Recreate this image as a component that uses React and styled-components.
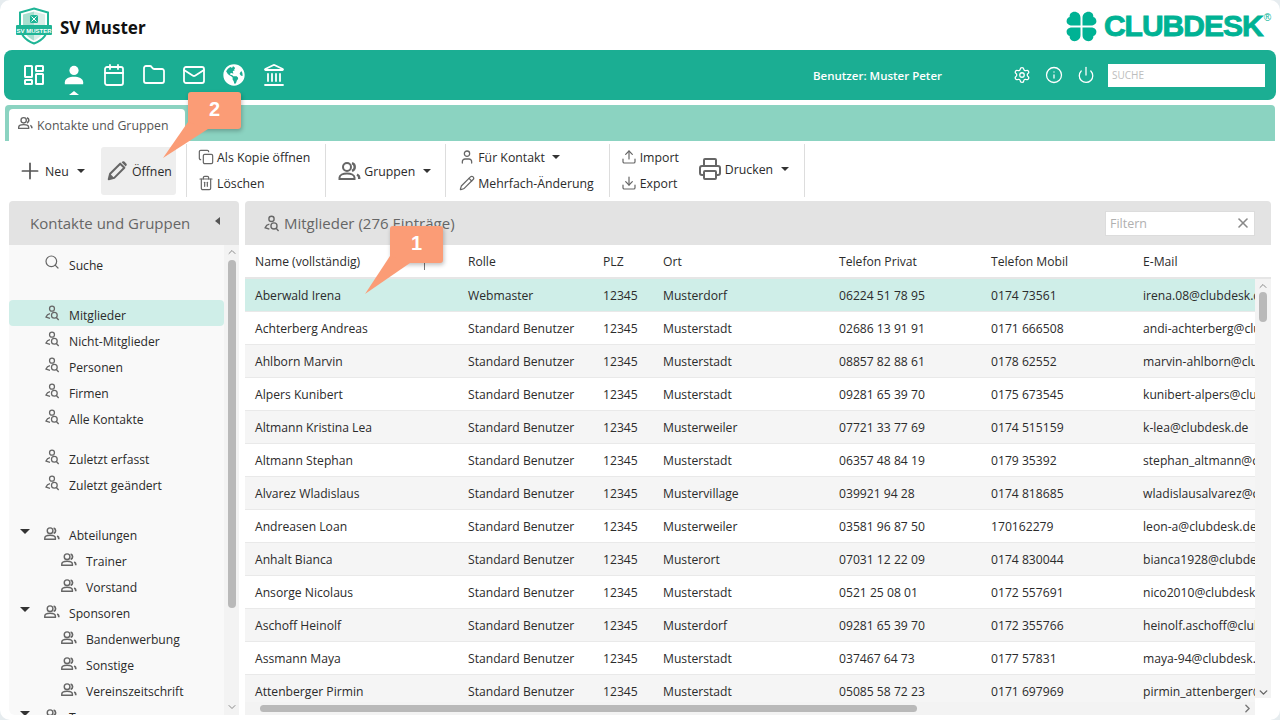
import React from "react";
import styled, { createGlobalStyle } from "styled-components";
import {
  Plus, Copy, Trash2, User, Pencil, Upload, Download, Printer, Search, X,
  Calendar, Folder, Mail, Landmark, Settings, Info, Power, ChevronUp, ChevronDown, ChevronRight,
} from "lucide-react";
import { FaGlobeAmericas } from "react-icons/fa";

const Global = createGlobalStyle`
  html, body { margin: 0; padding: 0; width: 1280px; height: 720px; overflow: hidden; background: #e6ecef; }
  #root { width: 1280px; height: 720px; }
  * { box-sizing: border-box; }
`;

const Page = styled.div`
  position: relative;
  width: 1280px; height: 720px;
  background: #fff;
  border-radius: 10px;
  overflow: hidden;
  display: flex; flex-direction: column;
  font-family: "Open Sans", "Noto Sans", sans-serif;
  font-size: 12.15px;
  color: #2b2b2b;
`;
const Header = styled.header`
  height: 50px; display: flex; align-items: center; justify-content: space-between;
  padding: 2px 9px 0 15px; flex: none;
`;
const Brand = styled.div`display: flex; align-items: center; gap: 7px;`;
const BrandName = styled.div`font-size: 17px; font-weight: 700; color: #111; font-family: "Noto Sans", sans-serif; margin-top: 3px;`;
const ClubLogo = styled.div`display: flex; align-items: center; gap: 7px; color: #00b294;`;
const ClubText = styled.div`
  font-family: "Liberation Sans", sans-serif; font-weight: 700; font-size: 30px; letter-spacing: -1px;
  -webkit-text-stroke: 0.9px #00b294; line-height: 30px; white-space: nowrap;
`;
const Reg = styled.sup`font-size: 10px; font-weight: 400; -webkit-text-stroke: 0; vertical-align: 15px; letter-spacing: 0; line-height: 0; margin-left: 1px;`;
const NavBar = styled.nav`
  flex: none; height: 50px; margin: 0 4px; background: #1bae93; border-radius: 8px;
  display: flex; align-items: center; color: #fff; padding: 0 11px 0 15px;
`;
const NavIcons = styled.div`display: flex; gap: 10px; align-items: center;`;
const NavIcon = styled.div`
  position: relative; width: 30px; height: 30px; display: flex; align-items: center; justify-content: center;
  ${p => p.$active && `
    &::after { content: ""; position: absolute; left: 10px; bottom: -5px; border: 5px solid transparent; border-top: 0; border-bottom: 4px solid #fff; }
  `}
`;
const NavUser = styled.div`margin-left: auto; font-size: 11.5px; font-weight: 600; margin-right: 70px;`;
const NavTools = styled.div`display: flex; gap: 12px; margin-right: 12px;`;
const NavTool = styled.div`width: 20px; height: 20px; display: flex; align-items: center; justify-content: center;`;
const SearchBox = styled.div`
  width: 157px; height: 23px; background: #fff; color: #bdbdbd; font-size: 10px; padding: 0 4px; display: flex; align-items: center;
`;
const TabStrip = styled.div`
  flex: none; height: 36px; margin: 5px 5px 0; padding: 4px 0 0 4px; background: #8bd3c1; border-radius: 4px 4px 0 0;
  display: flex;
`;
const Tab = styled.div`
  width: 176px; background: #fff; border-radius: 4px 4px 0 0; display: flex; align-items: center; gap: 4px; padding-left: 8px;
  color: #555; font-size: 12.3px;
`;
const TabIcon = styled.span`display: flex; margin-top: -4px;`;
const Toolbar = styled.div`
  flex: none; height: 59px; padding: 3px 0 3px 9px; display: flex; align-items: stretch; background: #fff; font-size: 12.3px;
`;
const Group = styled.div`
  display: flex; align-items: flex-start; padding: 0 ${p => p.$pr ?? 10}px 0 ${p => p.$pl ?? 10}px;
  ${p => p.$sep && "border-right: 1px solid #ddd;"}
`;
const BigBtn = styled.div`
  display: flex; align-items: center; gap: ${p => p.$gap ?? 3}px; padding-left: ${p => p.$pl ?? 0}px; border-radius: 3px;
  margin-top: ${p => p.$mt ?? 3}px; height: 48px; width: ${p => (p.$w ? `${p.$w}px` : "auto")};
  background: ${p => (p.$hover ? "#eeeeee" : "transparent")};
`;
const Stack = styled.div`display: flex; flex-direction: column;`;
const SmallBtn = styled.div`display: flex; align-items: center; gap: 3px; height: 26px; white-space: nowrap;`;
const Caret = styled.span`
  display: inline-block; margin-left: ${p => p.$ml ?? 5}px; border: 4px solid transparent; border-top: 4px solid #333; border-bottom: 0;
`;
const Main = styled.div`
  flex: 1; min-height: 0; display: flex; gap: 6px; padding: 1px 9px 5px;
`;
const SidePanel = styled.aside`width: 230px; display: flex; flex-direction: column; flex: none;`;
const PanelHead = styled.div`
  flex: none; height: 44px; background: #e3e3e3; border-radius: 4px 4px 0 0; display: flex; align-items: center;
  color: #666; font-size: 15px;
`;
const SideHead = styled(PanelHead)`padding: 0 19px 0 21px; justify-content: space-between;`;
const CollapseTri = styled.span`
  border: 4px solid transparent; border-right: 5px solid #555; border-left: 0; margin-top: -5px;
`;
const SideBody = styled.div`flex: 1; min-height: 0; display: flex; background: #f9f9f9; overflow: hidden; border-radius: 0 0 0 6px;`;
const Tree = styled.div`flex: 1; min-width: 0; padding-top: 5px; overflow: hidden;`;
const TreeRow = styled.div`
  height: 26px; display: flex; align-items: center; border-radius: 4px; flex: none;
  margin-top: ${p => p.$mt ?? 0}px;
  padding-left: ${p => p.$indent ?? 35}px;
  background: ${p => (p.$sel ? "#cfeee8" : "transparent")};
  gap: ${p => p.$gap ?? 9}px;
  white-space: nowrap;
`;
const RowLabel = styled.span`margin-top: 4px;`;
const SearchIconWrap = styled.span`display: flex; margin-top: -2px;`;
const TreeTri = styled.span`
  width: 0; height: 0; border: 5px solid transparent; border-top: 5px solid #333; border-bottom: 0; margin: -3px 4px 0 -23px;
`;
const VScroll = styled.div`
  width: ${p => p.$w}px; flex: none; display: flex; flex-direction: column; align-items: center; background: #f3f3f3;
  color: #8a8a8a; margin-bottom: ${p => p.$mb ?? 0}px; overflow: hidden;
`;
const Thumb = styled.div`
  width: 8px; background: #b9b9b9; border-radius: 4px; flex: none;
  margin-top: ${p => p.$mt}px; height: ${p => p.$h}px;
`;
const ArrowSlot = styled.div`height: 14px; display: flex; align-items: center; justify-content: center; flex: none; margin-top: ${p => p.$mt ?? 0}px;`;
const ContentPanel = styled.section`flex: 1; min-width: 0; display: flex; flex-direction: column;`;
const ContentHead = styled(PanelHead)`padding: 0 16px 0 18px; gap: 4px;`;
const FilterBox = styled.div`
  margin-left: auto; width: 150px; height: 25px; background: #fff; border: 1px solid #dcdcdc; color: #b0b0b0; font-size: 12.5px;
  display: flex; align-items: center; justify-content: space-between; padding: 0 3px 0 4px;
`;
const Columns = `grid-template-columns: 213px 135px 60px 176px 152px 152px 1fr;`;
const TableHead = styled.div`
  flex: none; height: 34px; display: grid; ${Columns} align-items: center; background: #fff; border-bottom: 2px solid #e6e6e6; position: relative;
  padding-right: 16px;
`;
const Cell = styled.div`padding-left: 10px; white-space: nowrap; overflow: hidden;`;
const ColGrip = styled.span`position: absolute; left: 179px; top: 14px; width: 1px; height: 11px; background: #777;`;
const TableBody = styled.div`flex: 1; min-height: 0; display: flex; overflow: hidden;`;
const Rows = styled.div`flex: 1; min-width: 0; overflow: hidden;`;
const Row = styled.div`
  height: 33px; display: grid; ${Columns} align-items: center; border-bottom: 1px solid #e9e9e9;
  background: ${p => (p.$sel ? "#cfeee8" : p.$alt ? "#f5f5f5" : "#fff")};
`;
const HScroll = styled.div`
  flex: none; height: 13px; display: flex; align-items: center; background: #f3f3f3; padding-left: 15px;
  margin-right: 16px; color: #777;
`;
const HThumb = styled.div`width: 657px; height: 7px; border-radius: 4px; background: #b9b9b9;`;
const HArrow = styled.div`margin-left: auto; margin-right: 1px; display: flex;`;
const Callout = styled.div`
  position: absolute; left: ${p => p.$x}px; top: ${p => p.$y}px; width: 53px; height: 37px; background: #fb9c76; border-radius: 3px;
  color: #fff; font-family: "Liberation Sans", sans-serif; font-weight: 700; font-size: 20px;
  display: flex; align-items: center; justify-content: center; padding-bottom: 3px;
  box-shadow: 1px 2px 4px rgba(0,0,0,.25); z-index: 3;
`;
const CalloutTail = styled.svg`position: absolute; left: -27px; top: 30px; overflow: visible;`;

const IconUsers = ({ s = 17, c = "#666" }) => (
  <svg width={s} height={s} viewBox="0 0 24 24" fill="none" stroke={c} strokeWidth="2">
    <circle cx="10" cy="8" r="4" />
    <path d="M2.500 20v-1.500C2.500 16 6 14.500 10 14.500s7.500 1.500 7.500 4V20z" />
    <path d="M15 4.200a4 4 0 0 1 0 7.600" strokeWidth="2.400" />
    <path d="M20 15.500c1.500.8 2.200 1.800 2.200 3V20" strokeWidth="2.400" />
  </svg>
);
const IconUserSearch = ({ s = 16 }) => (
  <svg width={s} height={s} viewBox="0 0 24 24" fill="none" stroke="#666" strokeWidth="1.900">
    <circle cx="12" cy="5.500" r="3.700" />
    <path d="M9 13c-3 .6-5 2.400-6 5l6 2" />
    <circle cx="15.500" cy="15.500" r="4.300" />
    <path d="M18.500 18.700l3.500 3.800" />
  </svg>
);
const DashIcon = () => (
  <svg width="24" height="24" viewBox="0 0 24 24" fill="none" stroke="#fff" strokeWidth="2">
    <rect x="3" y="3" width="7" height="11" rx=".5" />
    <rect x="14" y="3" width="7" height="5" rx=".5" />
    <rect x="14" y="11" width="7" height="10" rx=".5" />
    <rect x="3" y="17" width="7" height="4" rx=".5" />
  </svg>
);
const PersonIcon = () => (
  <svg width="22" height="22" viewBox="0 0 24 24" fill="#fff">
    <circle cx="12" cy="7" r="5" />
    <path d="M2 22v-2c0-4 5-6 10-6s10 2 10 6v2z" />
  </svg>
);
const PencilFat = () => (
  <svg width="22" height="22" viewBox="0 0 24 24" fill="#666">
    <path d="M3 21l1.500-6L15.500 4l4.500 4.500L9 19.500z" fill="none" stroke="#666" strokeWidth="2.200" strokeLinejoin="round" />
    <path d="M3 21l1.500-6 4.500 4.500z" />
    <path d="M17 2.500l1-.8a1.500 1.500 0 0 1 2 0l2.300 2.300a1.500 1.500 0 0 1 0 2l-.8 1z" />
  </svg>
);
const Shield = () => (
  <svg width="38" height="38" viewBox="0 0 38 38">
    <path d="M19 1.500l14 4v13c0 9-6 15-14 18-8-3-14-9-14-18v-13z" fill="#fff" stroke="#1fb596" strokeWidth="2" />
    <path d="M8 7.500l11-3v29c-6-2.500-11-8-11-15z" fill="#a7dfcf" />
    <path d="M19 4.500l11 3v11c0 7-5 12.500-11 15z" fill="#d9eee8" />
    <rect x="15" y="8" width="8" height="8" rx="1.500" fill="#1fb596" />
    <path d="M16.500 9.500l5 5M21.500 9.500l-5 5" stroke="#fff" strokeWidth="1" />
    <rect x="1" y="18" width="36" height="10" rx="1" fill="#1fb596" />
    <text x="19" y="25.500" textAnchor="middle" fontFamily="Liberation Sans" fontSize="6" fontWeight="700" fill="#fff">SV MUSTER</text>
  </svg>
);
const Petal = ({ t }) => (
  <path transform={t} d="M14.500 14.500V7C14.500 3 11.500 .8 8.500 .8 5.300.8 3.300 3.300 3.700 6 1.800 6.500.6 8.300.6 10.300c0 2.600 2.400 4.200 5.400 4.200z" />
);
const Clover = () => (
  <svg width="31" height="31" viewBox="0 0 31 31" fill="#00b294">
    <Petal t="" />
    <Petal t="translate(31 0) scale(-1 1)" />
    <Petal t="translate(0 31) scale(1 -1)" />
    <Petal t="translate(31 31) scale(-1 -1)" />
  </svg>
);

const people = [
  ["Aberwald Irena", "Webmaster", "Musterdorf", "06224 51 78 95", "0174 73561", "irena.08@clubdesk.de"],
  ["Achterberg Andreas", "Standard Benutzer", "Musterstadt", "02686 13 91 91", "0171 666508", "andi-achterberg@clubdesk.de"],
  ["Ahlborn Marvin", "Standard Benutzer", "Musterstadt", "08857 82 88 61", "0178 62552", "marvin-ahlborn@clubdesk.de"],
  ["Alpers Kunibert", "Standard Benutzer", "Musterstadt", "09281 65 39 70", "0175 673545", "kunibert-alpers@clubdesk.de"],
  ["Altmann Kristina Lea", "Standard Benutzer", "Musterweiler", "07721 33 77 69", "0174 515159", "k-lea@clubdesk.de"],
  ["Altmann Stephan", "Standard Benutzer", "Musterstadt", "06357 48 84 19", "0179 35392", "stephan_altmann@clubdesk.de"],
  ["Alvarez Wladislaus", "Standard Benutzer", "Mustervillage", "039921 94 28", "0174 818685", "wladislausalvarez@clubdesk.de"],
  ["Andreasen Loan", "Standard Benutzer", "Musterweiler", "03581 96 87 50", "170162279", "leon-a@clubdesk.de"],
  ["Anhalt Bianca", "Standard Benutzer", "Musterort", "07031 12 22 09", "0174 830044", "bianca1928@clubdesk.de"],
  ["Ansorge Nicolaus", "Standard Benutzer", "Musterstadt", "0521 25 08 01", "0172 557691", "nico2010@clubdesk.de"],
  ["Aschoff Heinolf", "Standard Benutzer", "Musterdorf", "09281 65 39 70", "0172 355766", "heinolf.aschoff@clubdesk.de"],
  ["Assmann Maya", "Standard Benutzer", "Musterstadt", "037467 64 73", "0177 57831", "maya-94@clubdesk.de"],
  ["Attenberger Pirmin", "Standard Benutzer", "Musterstadt", "05085 58 72 23", "0171 697969", "pirmin_attenberger@clubdesk.de"],
];

const tree = [
  { t: "Mitglieder", sel: true, mt: 24 }, { t: "Nicht-Mitglieder" }, { t: "Personen" }, { t: "Firmen" }, { t: "Alle Kontakte" },
  { t: "Zuletzt erfasst", mt: 14 }, { t: "Zuletzt geändert" },
];
const groups = [
  { t: "Abteilungen", tri: true, mt: 24 }, { t: "Trainer", sub: true }, { t: "Vorstand", sub: true },
  { t: "Sponsoren", tri: true }, { t: "Bandenwerbung", sub: true }, { t: "Sonstige", sub: true }, { t: "Vereinszeitschrift", sub: true },
  { t: "Teams", tri: true },
];

export default function App() {
  return (
    <Page>
      <Global />
      <Header>
        <Brand>
          <Shield />
          <BrandName>SV Muster</BrandName>
        </Brand>
        <ClubLogo>
          <Clover />
          <ClubText>CLUBDESK<Reg>®</Reg></ClubText>
        </ClubLogo>
      </Header>
      <NavBar>
        <NavIcons>
          <NavIcon><DashIcon /></NavIcon>
          <NavIcon $active><PersonIcon /></NavIcon>
          <NavIcon><Calendar size={24} strokeWidth={1.8} /></NavIcon>
          <NavIcon><Folder size={24} strokeWidth={1.8} /></NavIcon>
          <NavIcon><Mail size={24} strokeWidth={1.8} /></NavIcon>
          <NavIcon><FaGlobeAmericas size={22} /></NavIcon>
          <NavIcon><Landmark size={24} strokeWidth={1.8} /></NavIcon>
        </NavIcons>
        <NavUser>Benutzer: Muster Peter</NavUser>
        <NavTools>
          <NavTool><Settings size={18} strokeWidth={1.7} /></NavTool>
          <NavTool><Info size={18} strokeWidth={1.7} /></NavTool>
          <NavTool><Power size={18} strokeWidth={1.7} /></NavTool>
        </NavTools>
        <SearchBox>SUCHE</SearchBox>
      </NavBar>
      <TabStrip>
        <Tab><TabIcon><IconUsers s={16} /></TabIcon>Kontakte und Gruppen</Tab>
      </TabStrip>
      <Toolbar>
        <Group $sep $pl={0} $pr={10}>
          <BigBtn $w={92} $pl={8} $gap={2}>
            <Plus size={26} strokeWidth={1.6} color="#555" />
            <span>Neu</span><Caret $ml={6} />
          </BigBtn>
          <BigBtn $w={75} $hover $pl={5} $gap={4}>
            <PencilFat />
            <span>Öffnen</span>
          </BigBtn>
        </Group>
        <Group $sep $pl={11} $pr={15}>
          <Stack>
            <SmallBtn><Copy size={16} strokeWidth={1.8} color="#666" />Als Kopie öffnen</SmallBtn>
            <SmallBtn><Trash2 size={16} strokeWidth={1.8} color="#666" />Löschen</SmallBtn>
          </Stack>
        </Group>
        <Group $sep $pl={11} $pr={14}>
          <BigBtn $gap={3}>
            <IconUsers s={24} />
            <span>Gruppen</span><Caret />
          </BigBtn>
        </Group>
        <Group $sep $pl={13} $pr={15}>
          <Stack>
            <SmallBtn><User size={16} strokeWidth={1.9} color="#666" />Für Kontakt<Caret $ml={4} /></SmallBtn>
            <SmallBtn><Pencil size={16} strokeWidth={1.8} color="#666" />Mehrfach-Änderung</SmallBtn>
          </Stack>
        </Group>
        <Group $pl={11} $pr={0}>
          <Stack>
            <SmallBtn><Upload size={16} strokeWidth={1.8} color="#666" />Import</SmallBtn>
            <SmallBtn><Download size={16} strokeWidth={1.8} color="#666" />Export</SmallBtn>
          </Stack>
        </Group>
        <Group $sep $pl={19} $pr={15}>
          <BigBtn $gap={3} $mt={1}>
            <Printer size={24} strokeWidth={2} color="#666" />
            <span>Drucken</span><Caret />
          </BigBtn>
        </Group>
      </Toolbar>
      <Main>
        <SidePanel>
          <SideHead>Kontakte und Gruppen<CollapseTri /></SideHead>
          <SideBody>
            <Tree>
              <TreeRow><SearchIconWrap><Search size={16} strokeWidth={1.8} color="#666" /></SearchIconWrap><RowLabel>Suche</RowLabel></TreeRow>
              {tree.map(r => (
                <TreeRow key={r.t} $sel={r.sel} $mt={r.mt}><IconUserSearch /><RowLabel>{r.t}</RowLabel></TreeRow>
              ))}
              {groups.map(r => (
                <TreeRow key={r.t} $mt={r.mt} $indent={r.sub ? 51 : 34}>
                  {r.tri && <TreeTri />}
                  <IconUsers /><RowLabel>{r.t}</RowLabel>
                </TreeRow>
              ))}
            </Tree>
            <VScroll $w={15}>
              <ArrowSlot><ChevronUp size={12} strokeWidth={2} /></ArrowSlot>
              <Thumb $mt={1} $h={348} />
              <ArrowSlot $mt={92}><ChevronDown size={12} strokeWidth={2} /></ArrowSlot>
            </VScroll>
          </SideBody>
        </SidePanel>
        <ContentPanel>
          <ContentHead>
            <IconUserSearch s={17} />
            <span>Mitglieder (276 Einträge)</span>
            <FilterBox>Filtern<X size={16} strokeWidth={2.4} color="#888" /></FilterBox>
          </ContentHead>
          <TableHead>
            <Cell>Name (vollständig)</Cell><Cell>Rolle</Cell><Cell>PLZ</Cell><Cell>Ort</Cell>
            <Cell>Telefon Privat</Cell><Cell>Telefon Mobil</Cell><Cell>E-Mail</Cell>
            <ColGrip />
          </TableHead>
          <TableBody>
            <Rows>
              {people.map((p, i) => (
                <Row key={p[0]} $sel={i === 0} $alt={i % 2 === 0}>
                  <Cell>{p[0]}</Cell><Cell>{p[1]}</Cell><Cell>12345</Cell><Cell>{p[2]}</Cell>
                  <Cell>{p[3]}</Cell><Cell>{p[4]}</Cell><Cell>{p[5]}</Cell>
                </Row>
              ))}
            </Rows>
            <VScroll $w={16} $mb={4}>
              <ArrowSlot><ChevronUp size={12} strokeWidth={2} /></ArrowSlot>
              <Thumb $mt={-1} $h={30} />
              <ArrowSlot $mt={363}><ChevronDown size={13} strokeWidth={2.600} color="#666" /></ArrowSlot>
            </VScroll>
          </TableBody>
          <HScroll>
            <HThumb />
            <HArrow><ChevronRight size={13} strokeWidth={2.600} /></HArrow>
          </HScroll>
        </ContentPanel>
      </Main>
      <Callout $x={390} $y={226}>
        <CalloutTail width="60" height="40"><path d="M27 0 L2 38 L47 7 Z" fill="#fb9c76" /></CalloutTail>
        1
      </Callout>
      <Callout $x={188} $y={92}>
        <CalloutTail width="60" height="40"><path d="M27 0 L2 36 L47 7 Z" fill="#fb9c76" /></CalloutTail>
        2
      </Callout>
    </Page>
  );
}
